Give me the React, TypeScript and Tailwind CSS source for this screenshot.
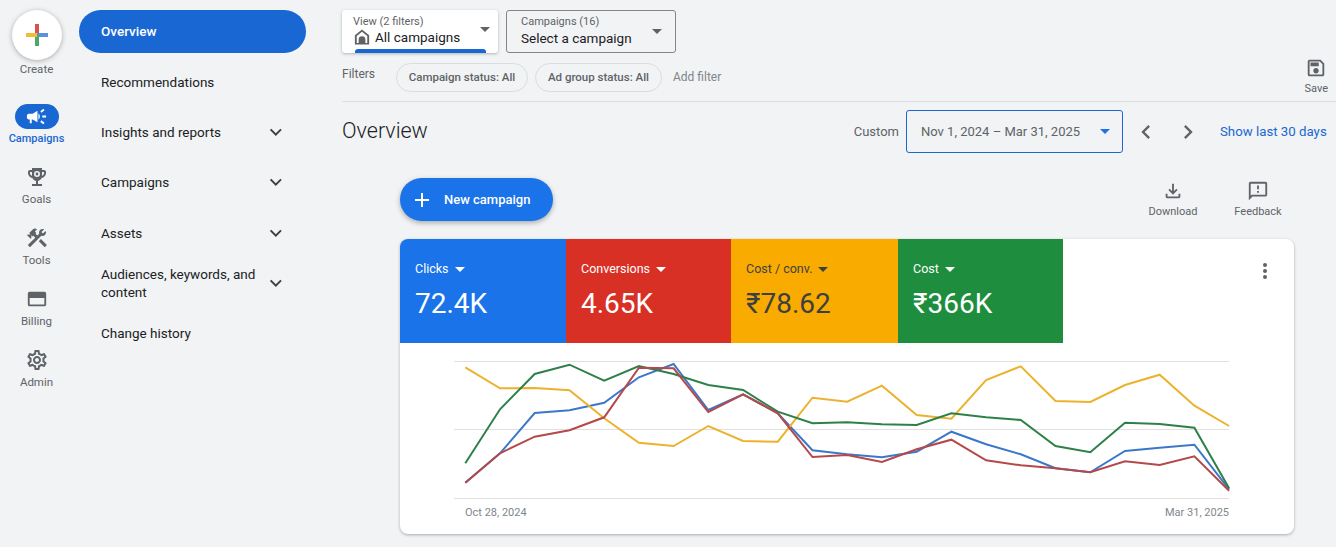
import type { ReactNode } from "react";
import {
  MdAdd,
  MdCampaign,
  MdChevronLeft,
  MdChevronRight,
  MdConstruction,
  MdExpandMore,
  MdOutlineFeedback,
  MdOutlineFileDownload,
  MdOutlineSave,
  MdOutlineSettings,
} from "react-icons/md";

// chart values, read off the picture (one per week)
const yellow = [52, 115, 114, 121, 205, 278, 288, 228, 273, 275, 143, 155, 107, 195, 206, 90, 49, 153, 156, 105, 74, 167, 228];
const green = [340, 178, 72, 44, 92, 48, 72, 105, 120, 185, 220, 217, 223, 225, 190, 202, 210, 288, 307, 218, 222, 233, 415];
const blue = [398, 310, 189, 181, 158, 82, 42, 180, 133, 190, 301, 313, 322, 305, 245, 283, 313, 355, 367, 303, 293, 284, 418];
const red = [398, 310, 260, 241, 202, 53, 55, 186, 133, 190, 321, 315, 336, 298, 269, 331, 346, 355, 367, 334, 345, 319, 422];

const toPoints = (values: number[]) =>
  values.map((v, i) => `${(65.3 + i * 34.72).toFixed(1)},${(v / 3 + 7).toFixed(1)}`).join(" ");

function Caret({ className }: { className: string }) {
  return (
    <svg width="10" height="5" viewBox="0 0 10 5" className={className}>
      <path d="M0 0h10L5 5z" fill="currentColor" />
    </svg>
  );
}

function TrophyIcon() {
  return (
    <svg width="24" height="24" viewBox="0 0 24 24">
      <path
        fill="currentColor"
        d="M19 5h-2V3H7v2H5c-1.1 0-2 .9-2 2v1c0 2.55 1.92 4.63 4.39 4.94.63 1.5 1.98 2.63 3.61 2.96V19H7v2h10v-2h-4v-3.1c1.63-.33 2.98-1.46 3.61-2.96C19.08 12.63 21 10.55 21 8V7c0-1.1-.9-2-2-2zM5 8V7h2v3.82C5.84 10.4 5 9.3 5 8zm14 0c0 1.3-.84 2.4-2 2.82V7h2v1z"
      />
      <circle cx="12" cy="9" r="3" fill="#f1f3f4" />
      <circle cx="12" cy="9" r="1.4" fill="currentColor" />
    </svg>
  );
}

function BillingIcon() {
  return (
    <svg width="22" height="22" viewBox="0 0 24 24">
      <path
        fill="currentColor"
        d="M20 4H4c-1.1 0-2 .9-2 2v12c0 1.1.9 2 2 2h16c1.1 0 2-.9 2-2V6c0-1.1-.9-2-2-2zm0 14H4v-7h16v7z"
      />
    </svg>
  );
}

function HomeIcon() {
  return (
    <svg width="18" height="18" viewBox="0 0 24 24" className="text-[#5f6368]">
      <path
        fill="currentColor"
        fillRule="evenodd"
        d="M12 2L2.5 9.5V22h19V9.5L12 2zm0 3l7 5.6V20h-2.5v-4.5a4.5 4.5 0 0 0-9 0V20H5v-9.4L12 5z"
      />
    </svg>
  );
}

function RailItem({ icon, label }: { icon: ReactNode; label: string }) {
  return (
    <div className="flex h-[61px] flex-col items-center pt-[5px] text-[#5f6368]">
      <div className="flex h-[24px] items-center text-[#5f6368]">{icon}</div>
      <span className="mt-[3px] text-[11.5px] leading-[14px]">{label}</span>
    </div>
  );
}

function NavRow({ label, arrow }: { label: string; arrow?: boolean }) {
  return (
    <div className="flex h-[50.2px] items-center justify-between pl-[22px] pr-[18px]">
      <span className="w-[166px] text-[13.5px] leading-[18px] text-[#202124]">{label}</span>
      {arrow && <MdExpandMore size={24} className="text-[#3c4043]" />}
    </div>
  );
}

function Tile({ label, value, bg, dark }: { label: string; value: string; bg: string; dark?: boolean }) {
  return (
    <div className={`flex h-[104px] flex-col pl-[15px] pt-[22px] ${bg} ${dark ? "text-[#3c4043]" : "text-white"}`}>
      <div className="flex items-center gap-[6px] text-[12.5px] leading-[16px]">
        {label}
        <Caret className={dark ? "text-[#3c4043]" : "text-white"} />
      </div>
      <div className="mt-[9px] text-[28px] leading-[36px]">{value}</div>
    </div>
  );
}

function ActionItem({ icon, label, width }: { icon: ReactNode; label: string; width: string }) {
  return (
    <div className={`flex flex-col items-center text-[#5f6368] ${width}`}>
      {icon}
      <span className="mt-[3px] text-[11px] leading-[14px]">{label}</span>
    </div>
  );
}

export default function App() {
  return (
    <div className="flex h-[547px] w-[1336px] overflow-hidden bg-[#f1f3f4] font-['Roboto',sans-serif]">
      {/* left rail */}
      <div className="flex w-[73px] shrink-0 flex-col items-center pt-[10px]">
        <div className="flex h-[50px] w-[50px] items-center justify-center rounded-full bg-white shadow-[0_1px_5px_rgba(60,64,67,0.4)]">
          <svg width="24" height="24" viewBox="0 0 24 24">
            <rect x="10" y="1" width="4" height="11" fill="#d9534a" />
            <rect x="12" y="10" width="11" height="4" fill="#5b8fe0" />
            <rect x="10" y="12" width="4" height="11" fill="#4fa866" />
            <rect x="1" y="10" width="11" height="4" fill="#f2bd34" />
          </svg>
        </div>
        <span className="mt-[2px] text-[11.5px] leading-[14px] text-[#5f6368]">Create</span>
        <div className="mt-[28px] flex h-[25px] w-[44px] items-center justify-center rounded-full bg-[#1967d2] text-white">
          <MdCampaign size={23} />
        </div>
        <span className="mt-[3px] text-[11px] leading-[14px] font-medium text-[#1967d2]">Campaigns</span>
        <div className="mt-[14px] flex w-full flex-col">
          <RailItem icon={<TrophyIcon />} label="Goals" />
          <RailItem icon={<MdConstruction size={24} />} label="Tools" />
          <RailItem icon={<BillingIcon />} label="Billing" />
          <RailItem icon={<MdOutlineSettings size={24} />} label="Admin" />
        </div>
      </div>

      {/* second nav */}
      <div className="flex w-[269px] shrink-0 flex-col pt-[10px]">
        <div className="mb-[4px] ml-[6px] flex h-[43px] w-[227px] items-center rounded-full bg-[#1967d2] pl-[22px] text-[13.5px] font-medium text-white">
          Overview
        </div>
        <div className="flex w-[233px] flex-col pl-[6px]">
          <NavRow label="Recommendations" />
          <NavRow label="Insights and reports" arrow />
          <NavRow label="Campaigns" arrow />
          <NavRow label="Assets" arrow />
          <NavRow label="Audiences, keywords, and content" arrow />
          <NavRow label="Change history" />
        </div>
      </div>

      {/* main */}
      <div className="flex min-w-0 flex-1 flex-col pt-[10px]">
        <div className="flex gap-[8px]">
          <div className="flex h-[43px] w-[156px] flex-col rounded-[3px] bg-white pl-[11px] shadow-[0_1px_3px_rgba(60,64,67,0.35)]">
            <div className="flex flex-1 items-center justify-between pr-[8px]">
              <div>
                <div className="mt-[2px] text-[11px] leading-[13px] text-[#5f6368]">View (2 filters)</div>
                <div className="flex items-center gap-[4px] text-[13.5px] leading-[18px] text-[#202124]">
                  <HomeIcon />
                  All campaigns
                </div>
              </div>
              <Caret className="text-[#5f6368]" />
            </div>
            <div className="ml-[2px] h-[4px] w-[131px] rounded-t-[3px] bg-[#1967d2]" />
          </div>
          <div className="flex h-[43px] w-[170px] items-center justify-between rounded-[3px] border border-[#80868b] pl-[14px] pr-[13px]">
            <div className="pb-[1px]">
              <div className="text-[11px] leading-[14px] text-[#5f6368]">Campaigns (16)</div>
              <div className="text-[13.5px] leading-[18px] text-[#202124]">Select a campaign</div>
            </div>
            <Caret className="text-[#5f6368]" />
          </div>
        </div>

        <div className="mt-[10px] flex h-[39px] items-start border-b border-[#dadce0] pr-[8px]">
          <span className="mt-[3px] w-[54px] text-[12px] leading-[16px] text-[#5f6368]">Filters</span>
          <div className="flex h-[29px] w-[132px] items-center justify-center rounded-full border border-[#dadce0] text-[11.5px] font-medium text-[#5f6368]">
            Campaign status: All
          </div>
          <div className="ml-[7px] flex h-[29px] w-[127px] items-center justify-center rounded-full border border-[#dadce0] text-[11.5px] font-medium text-[#5f6368]">
            Ad group status: All
          </div>
          <span className="ml-[11px] mt-[6px] text-[12px] leading-[16px] text-[#80868b]">Add filter</span>
          <div className="ml-auto -mt-[6px] flex flex-col items-center text-[#5f6368]">
            <MdOutlineSave size={22} />
            <span className="mt-[3px] text-[11px] leading-[14px]">Save</span>
          </div>
        </div>

        <div className="mt-[8px] flex h-[43px] items-center pr-[9px]">
          <span className="text-[21.5px] font-light text-[#202124]">Overview</span>
          <span className="ml-auto text-[13px] text-[#5f6368]">Custom</span>
          <div className="ml-[7px] flex h-[43px] w-[217px] items-center justify-between rounded-[3px] border border-[#1967d2] pl-[14px] pr-[12px] text-[13px] text-[#5f6368]">
            Nov 1, 2024 – Mar 31, 2025
            <Caret className="text-[#1a73e8]" />
          </div>
          <MdChevronLeft size={28} className="ml-[9px] text-[#5f6368]" />
          <MdChevronRight size={28} className="ml-[14px] text-[#5f6368]" />
          <span className="ml-[18px] w-[107px] whitespace-nowrap text-[13.25px] text-[#1967d2]">Show last 30 days</span>
        </div>

        <div className="ml-[58px] mr-[42px] flex flex-col">
          <div className="mt-[25px] flex items-start">
            <div className="flex h-[43px] w-[153px] items-center rounded-full bg-[#1a73e8] pl-[10px] text-white shadow-[0_2px_5px_rgba(60,64,67,0.4)]">
              <MdAdd size={24} />
              <span className="ml-[10px] text-[13px] font-medium">New campaign</span>
            </div>
            <div className="ml-auto mr-[9px] mt-[2px] flex">
              <ActionItem icon={<MdOutlineFileDownload size={22} />} label="Download" width="w-[54px]" />
              <ActionItem icon={<MdOutlineFeedback size={22} />} label="Feedback" width="w-[54px] ml-[31px]" />
            </div>
          </div>

          <div className="mt-[18px] flex h-[295px] flex-col overflow-hidden rounded-[8px] bg-white shadow-[0_1px_3px_rgba(60,64,67,0.4)]">
            <div className="flex items-start">
              <div className="grid w-[663px] grid-cols-[166px_165px_167px_165px]">
                <Tile label="Clicks" value="72.4K" bg="bg-[#1a73e8]" />
                <Tile label="Conversions" value="4.65K" bg="bg-[#d93025]" />
                <Tile label="Cost / conv." value="₹78.62" bg="bg-[#f9ab00]" dark />
                <Tile label="Cost" value="₹366K" bg="bg-[#1e8e3e]" />
              </div>
              <svg width="24" height="24" viewBox="0 0 24 24" className="ml-auto mr-[17px] mt-[20px] text-[#5f6368]">
                <circle cx="12" cy="6" r="2" fill="currentColor" />
                <circle cx="12" cy="12" r="2" fill="currentColor" />
                <circle cx="12" cy="18" r="2" fill="currentColor" />
              </svg>
            </div>
            <svg width="894" height="163" viewBox="0 0 894 163" fill="none" className="shrink-0">
              <path d="M54 18.5H829M54 86.5H829M54 155.5H829" stroke="#e0e0e0" />
              <polyline points={toPoints(blue)} stroke="#3b78c9" strokeWidth="2" />
              <polyline points={toPoints(yellow)} stroke="#ecb22e" strokeWidth="2" />
              <polyline points={toPoints(green)} stroke="#2e8049" strokeWidth="2" />
              <polyline points={toPoints(red)} stroke="#b5484a" strokeWidth="2" />
            </svg>
            <div className="flex justify-between pl-[65px] pr-[65px] text-[11px] leading-[14px] text-[#80868b]">
              <span>Oct 28, 2024</span>
              <span>Mar 31, 2025</span>
            </div>
          </div>
        </div>
      </div>
    </div>
  );
}
